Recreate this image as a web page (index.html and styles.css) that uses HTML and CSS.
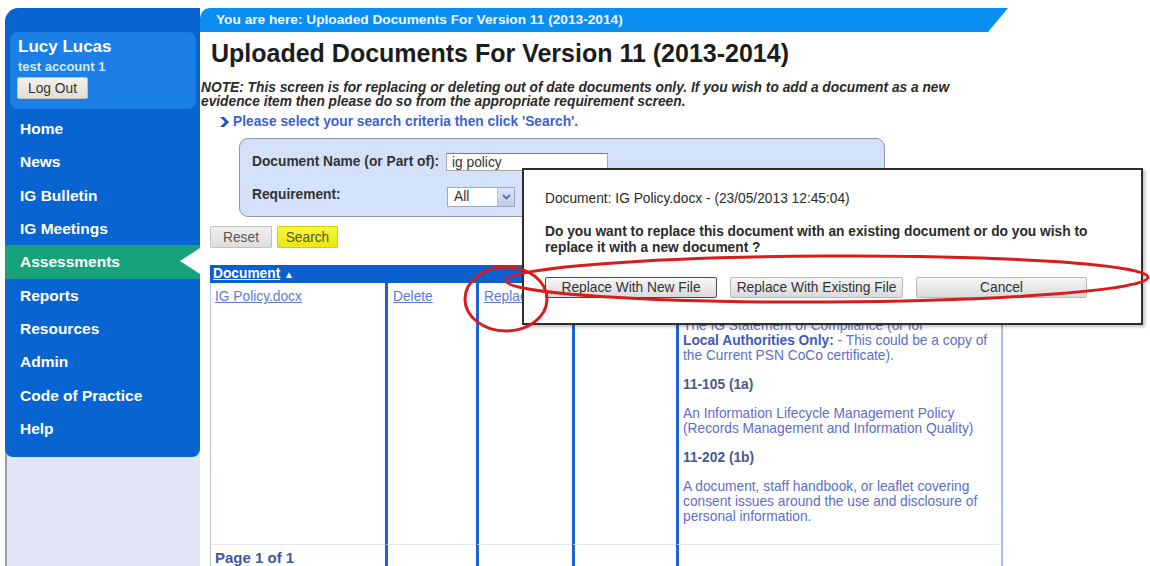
FILE: index.html
```html
<!DOCTYPE html>
<html lang="en">
<head>
<meta charset="utf-8">
<title>Uploaded Documents For Version 11 (2013-2014)</title>
<link rel="stylesheet" href="styles.css">
</head>
<body>
<div class="page">
  <aside class="sidebar">
    <div class="nav-panel">
      <div class="user-box">
        <div class="user-name">Lucy Lucas</div>
        <div class="user-account">test account 1</div>
        <button class="btn-logout" type="button">Log Out</button>
      </div>
      <ul class="nav">
        <li>Home</li>
        <li>News</li>
        <li>IG Bulletin</li>
        <li>IG Meetings</li>
        <li class="active">Assessments</li>
        <li>Reports</li>
        <li>Resources</li>
        <li>Admin</li>
        <li>Code of Practice</li>
        <li>Help</li>
      </ul>
    </div>
  </aside>

  <main class="main">
    <div class="crumb">You are here: Uploaded Documents For Version 11 (2013-2014)</div>
    <div class="content">
      <h1 class="title">Uploaded Documents For Version 11 (2013-2014)</h1>
      <p class="note">NOTE: This screen is for replacing or deleting out of date documents only. If you wish to add a document as a new evidence item then please do so from the appropriate requirement screen.</p>
      <p class="hint">
        <svg class="hint-icon" width="9" height="10" viewBox="0 0 9 10"><polygon points="0,0 4,0 9,5 4,10 0,10 5,5" fill="#1d52c4"/></svg>
        <span>Please select your search criteria then click 'Search'.</span>
      </p>

      <div class="search-panel">
        <label class="field-label">Document Name (or Part of):</label>
        <input class="field" type="text" value="ig policy">
        <label class="field-label field-label-top">Requirement:</label>
        <div class="select">
          <span class="select-value">All</span>
          <span class="select-arrow"><svg width="9" height="6" viewBox="0 0 9 6"><polyline points="1,1 4.5,4.5 8,1" fill="none" stroke="#5a6c9c" stroke-width="1.8"/></svg></span>
        </div>
      </div>

      <div class="actions">
        <button class="btn btn-reset" type="button">Reset</button>
        <button class="btn btn-search" type="button">Search</button>
      </div>

      <table class="docs">
        <thead>
          <tr>
            <th class="c1"><a class="sort-link">Document</a> <span class="sort-arrow">&#9650;</span></th>
            <th class="c2"></th>
            <th class="c3"></th>
            <th class="c4"></th>
            <th class="c5">Requirements</th>
          </tr>
        </thead>
        <tbody>
          <tr class="doc-row">
            <td class="c1"><a class="link">IG Policy.docx</a></td>
            <td class="c2"><a class="link">Delete</a></td>
            <td class="c3"><a class="link">Replace</a></td>
            <td class="c4"><a class="link">View</a></td>
            <td class="c5">
              <div class="req-code">11-101 (1a)</div>
              <p class="req-text">The IG Statement of Compliance (or for<br><b>Local Authorities Only:</b> - This could be a copy of the Current PSN CoCo certificate).</p>
              <div class="req-code">11-105 (1a)</div>
              <p class="req-text">An Information Lifecycle Management Policy (Records Management and Information Quality)</p>
              <div class="req-code">11-202 (1b)</div>
              <p class="req-text">A document, staff handbook, or leaflet covering consent issues around the use and disclosure of personal information.</p>
            </td>
          </tr>
          <tr class="pager-row">
            <td class="c1"><span class="pager">Page 1 of 1</span></td>
            <td class="c2"></td>
            <td class="c3"></td>
            <td class="c4"></td>
            <td class="c5"></td>
          </tr>
        </tbody>
      </table>
    </div>
  </main>
</div>

<div class="dialog">
  <div class="dialog-title">Document: IG Policy.docx - (23/05/2013 12:45:04)</div>
  <p class="dialog-question">Do you want to replace this document with an existing document or do you wish to replace it with a new document ?</p>
  <div class="dialog-actions">
    <button class="dlg-btn dlg-btn-focus dlg-new" type="button">Replace With New File</button>
    <button class="dlg-btn dlg-existing" type="button">Replace With Existing File</button>
    <button class="dlg-btn dlg-cancel" type="button">Cancel</button>
  </div>
</div>

<svg class="marks" width="1150" height="566" viewBox="0 0 1150 566">
  <ellipse cx="506" cy="299" rx="41" ry="32" fill="none" stroke="#d81c1c" stroke-width="3"/>
  <ellipse cx="827" cy="279" rx="321" ry="23" fill="none" stroke="#d81c1c" stroke-width="3" transform="rotate(-0.3 827 279)"/>
</svg>
</body>
</html>
```

FILE: styles.css
```css
* { box-sizing: border-box; }

body {
  margin: 0;
  width: 1150px;
  height: 566px;
  overflow: hidden;
  background: #fff;
  color: #333;
  font-family: "Liberation Sans", Arial, sans-serif;
  font-size: 13.75px;
}

p { margin: 0; }

.page {
  display: flex;
  height: 566px;
  padding: 8px 0 0 5px;
}

/* ---------- left navigation ---------- */
.sidebar {
  width: 195px;
  flex: none;
  display: flex;
  flex-direction: column;
  background: #e3e6f7;
  border-top-left-radius: 14px;
  box-shadow: inset 2px 0 0 #9c9ca8;
}

.nav-panel {
  background: #0864d0;
  border-radius: 14px 0 8px 8px;
  padding: 24px 0 12px 0;
}

.user-box {
  margin: 0 4px 0 5px;
  padding: 5px 8px 10px 8px;
  background: #1c7fe6;
  border-radius: 8px;
}

.user-name {
  color: #fff;
  font-weight: bold;
  font-size: 17px;
  line-height: 20px;
}

.user-account {
  margin-top: 2px;
  color: #d6e8ff;
  font-weight: bold;
  font-size: 13px;
  line-height: 16px;
}

.btn-logout {
  display: block;
  margin: 2px 0 0 -1px;
  width: 71px;
  height: 22px;
  padding: 0;
  font: 13.75px "Liberation Sans", Arial, sans-serif;
  color: #333;
  background: linear-gradient(#f4f2ee, #e2ded6);
  border: 1px solid #c4c0b8;
  border-radius: 2px;
}

.nav {
  list-style: none;
  margin: 3px 0 0 0;
  padding: 0;
}

.nav li {
  position: relative;
  height: 33.33px;
  line-height: 33.33px;
  padding-left: 15px;
  color: #fff;
  font-weight: bold;
  font-size: 15.5px;
}

.nav li.active {
  background: #18a27c;
}

.nav li.active::after {
  content: "";
  position: absolute;
  right: 0;
  top: 3px;
  border-right: 20px solid #fff;
  border-top: 13px solid transparent;
  border-bottom: 13px solid transparent;
}

/* ---------- main column ---------- */
.main {
  flex: 1;
  min-width: 0;
}

.crumb {
  width: 808px;
  height: 24px;
  padding-left: 16px;
  line-height: 24px;
  background: #0b8ef2;
  color: #eef7ff;
  font-weight: bold;
  font-size: 13.7px;
  border-top-left-radius: 10px;
  clip-path: polygon(0 0, 100% 0, calc(100% - 20px) 100%, 0 100%);
}

.content {
  padding-left: 10px;
}

.title {
  margin: 7px 0 0 1px;
  font-size: 25px;
  line-height: 28px;
  font-weight: bold;
  color: #1c1c1c;
}

.note {
  width: 760px;
  margin: 14px 0 0 -9px;
  font-style: italic;
  font-weight: bold;
  line-height: 14px;
  color: #2a2a2a;
}

.hint {
  display: flex;
  align-items: center;
  gap: 4px;
  margin: 5px 0 0 10px;
  line-height: 16px;
  color: #3c62d0;
  font-weight: bold;
}

.hint-icon { flex: none; }

/* ---------- search criteria ---------- */
.search-panel {
  display: grid;
  grid-template-columns: 194px auto;
  row-gap: 7px;
  align-items: start;
  width: 646px;
  height: 79px;
  margin: 8px 0 0 29px;
  padding: 14px 0 0 12px;
  background: #d3e2fa;
  border: 1px solid #8e96a8;
  border-radius: 9px;
}

.field-label {
  font-weight: bold;
  line-height: 18px;
  color: #333;
}

.field-label-top { line-height: 16px; }

.field {
  width: 162px;
  height: 18px;
  margin: 0;
  padding: 0 5px;
  font: 13.75px "Liberation Sans", Arial, sans-serif;
  color: #333;
  background: #fff;
  border: 1px solid #a8a8a8;
  border-top-color: #7c7c7c;
  outline: none;
}

.select {
  display: flex;
  width: 68px;
  height: 20px;
  margin-left: 1px;
  background: #fff;
  border: 1px solid #a0a8b8;
}

.select-value {
  flex: 1;
  padding-left: 6px;
  line-height: 18px;
  color: #333;
}

.select-arrow {
  display: flex;
  align-items: center;
  justify-content: center;
  width: 17px;
  background: linear-gradient(#dde6f8, #bccbee);
  border-left: 1px solid #b4c0dc;
}

.actions {
  display: flex;
  gap: 5px;
  margin-top: 9px;
}

.btn {
  height: 22px;
  padding: 0;
  font: 13.75px "Liberation Sans", Arial, sans-serif;
  border-radius: 1px;
}

.btn-reset {
  width: 62px;
  color: #555;
  background: linear-gradient(#f0f0f0, #dedede);
  border: 1px solid #c2c2c2;
}

.btn-search {
  width: 61px;
  color: #55552a;
  background: linear-gradient(#f8f640, #ece812);
  border: 1px solid #d2cc10;
}

/* ---------- documents table ---------- */
.docs {
  margin-top: 17px;
  width: 793px;
  table-layout: fixed;
  border-collapse: separate;
  border-spacing: 0;
}

.docs th {
  height: 17px;
  padding: 0 0 0 3px;
  line-height: 17px;
  text-align: left;
  background: #0c5fce;
  color: #fff;
  font-weight: bold;
  white-space: nowrap;
  overflow: hidden;
}

.docs .c1 { width: 175px; }
.docs .c2 { width: 91px; }
.docs .c3 { width: 96px; }
.docs .c4 { width: 104px; }
.docs .c5 { width: 327px; }

.sort-link { text-decoration: underline; }
.sort-arrow { font-size: 10px; }

.docs td {
  vertical-align: top;
  padding: 6px 4px 0 5px;
  line-height: 15px;
  border-left: 3px solid #1b62d2;
}

.docs td.c1 {
  padding-left: 4px;
  border-left: 1px solid #b8c4d8;
}

.docs td.c5 {
  padding: 6px 8px 0 4px;
  border-right: 2px solid #a6bde6;
}

.doc-row td { height: 261px; }

.link {
  color: #5e78d8;
  text-decoration: underline;
  white-space: nowrap;
}

.req-code {
  font-weight: bold;
  color: #4a5890;
}

.req-text {
  margin: 14px 0;
  color: #5c6ec8;
}

.req-text b { color: #3e5ab8; }

.pager-row td {
  height: 30px;
  padding-top: 4px;
  border-top: 1px solid #e2e6f0;
}

.pager {
  font-weight: bold;
  font-size: 15px;
  line-height: 18px;
  color: #3f56a6;
}

/* ---------- replace dialog ---------- */
.dialog {
  position: absolute;
  left: 522px;
  top: 168px;
  width: 621px;
  height: 157px;
  padding: 21px 0 0 21px;
  background: #fff;
  border: 2px solid #2e2e2e;
  box-shadow: 2px 2px 3px rgba(0, 0, 0, 0.25);
}

.dialog-title {
  line-height: 16px;
  color: #2a2a2a;
}

.dialog-question {
  width: 560px;
  margin-top: 17px;
  line-height: 16px;
  font-weight: bold;
  color: #2a2a2a;
}

.dialog-actions {
  display: flex;
  gap: 13px;
  margin-top: 21px;
}

.dlg-btn {
  height: 21px;
  padding: 0;
  font: 13.75px "Liberation Sans", Arial, sans-serif;
  color: #333;
  background: linear-gradient(#f7f7f7, #dadada);
  border: 1px solid #b8b8b8;
  border-radius: 2px;
}

.dlg-btn-focus { border-color: #4a4a4a; }
.dlg-new { width: 172px; }
.dlg-existing { width: 173px; }
.dlg-cancel { width: 171px; }

/* hand-drawn highlight rings */
.marks {
  position: absolute;
  left: 0;
  top: 0;
  pointer-events: none;
}
```
